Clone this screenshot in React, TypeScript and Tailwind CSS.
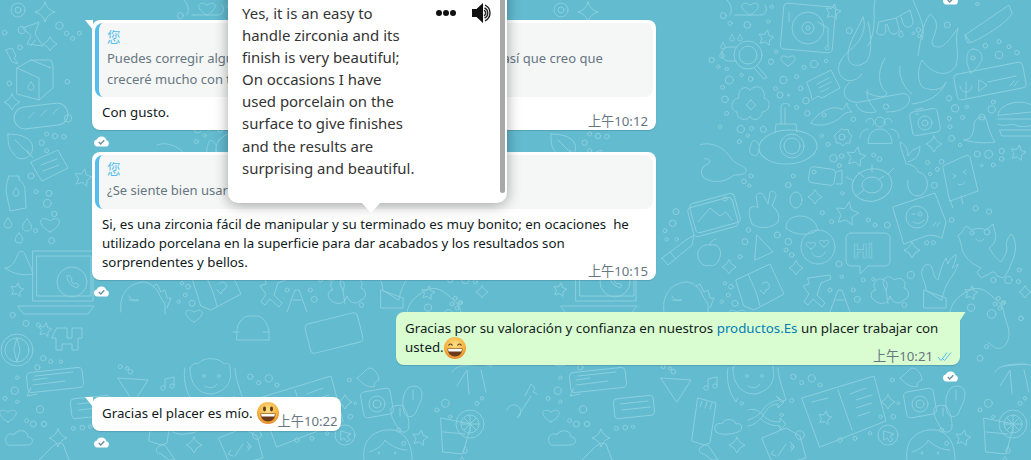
import React from "react";

const star = (cx: number, cy: number, r: number) => {
  let d = "";
  for (let i = 0; i < 10; i++) {
    const a = -Math.PI / 2 + (i * Math.PI) / 5 + 0.2;
    const q = i % 2 ? r * 0.5 : r;
    d += `${i ? "L" : "M"}${(cx + q * Math.cos(a)).toFixed(1)} ${(cy + q * Math.sin(a)).toFixed(1)}`;
  }
  return d + "Z";
};
const sparkle = (x: number, y: number, r: number) =>
  `M${x} ${y - r}Q${x + 2} ${y - 2} ${x + r} ${y}Q${x + 2} ${y + 2} ${x} ${y + r}Q${x - 2} ${y + 2} ${x - r} ${y}Q${x - 2} ${y - 2} ${x} ${y - r}Z`;
const heart = (x: number, y: number, s: number) =>
  `M${x} ${y + s}C${x - 2 * s} ${y - 0.1 * s} ${x - 1.1 * s} ${y - 1.2 * s} ${x} ${y - 0.4 * s}C${x + 1.1 * s} ${y - 1.2 * s} ${x + 2 * s} ${y - 0.1 * s} ${x} ${y + s}Z`;
const drop = (x: number, y: number, s: number) =>
  `M${x} ${y - s}C${x + s} ${y} ${x + s} ${y + s} ${x} ${y + s}C${x - s} ${y + s} ${x - s} ${y} ${x} ${y - s}Z`;

const Box = ({ x, y, w, h, a = 0, r = 4 }: { x: number; y: number; w: number; h: number; a?: number; r?: number }) => (
  <rect x={x - w / 2} y={y - h / 2} width={w} height={h} rx={r} transform={`rotate(${a} ${x} ${y})`} />
);
const C = ({ x, y, r }: { x: number; y: number; r: number }) => <circle cx={x} cy={y} r={r} />;

// little bubbles, in zoomed crop coordinates
const dots9 = [[70,47,9],[142,75,10],[90,70,6],[205,65,5],[215,20,5],[228,155,5],[213,185,8],[55,200,5],[80,207,5],[35,180,8],[88,240,12],[125,225,5],[152,237,7],[68,262,6],[75,298,10],[80,340,6],[250,240,11],[290,230,6],[227,265,6],[240,285,9],[302,265,7],[265,285,3],[318,302,10],[290,322,6],[322,340,8],[342,192,11],[312,202,6],[378,183,5],[558,320,8],[448,92,9],[460,358,7],[655,90,7],[640,100,4],[658,108,5],[742,75,9],[832,12,5],[856,137,7],[897,125,6],[927,140,6],[951,158,7],[897,165,11],[747,295,8],[765,325,11],[800,320,5],[875,328,11],[880,306,6],[748,355,6],[788,352,6],[750,380,6],[755,415,9],[780,435,5],[832,462,9],[866,463,12],[905,453,8],[905,477,7],[845,497,4],[880,495,6],[122,387,11],[155,385,6],[190,388,9],[143,407,5],[60,380,5],[118,425,6],[365,407,5],[384,433,6],[400,475,11],[425,468,7],[418,497,6],[521,465,6],[538,477,7],[683,487,6],[725,485,7],[712,508,6],[690,522,5],[703,556,9],[280,528,6],[265,555,8],[132,544,7],[153,528,6],[148,557,5],[427,580,5]];
const dots11 = [[48,65,9],[38,100,10],[15,122,6],[50,148,5],[20,148,5],[265,120,7],[255,155,9],[352,135,9],[385,155,10],[378,180,6],[395,195,7],[240,200,6],[195,280,5],[213,290,7],[205,315,6],[225,340,9],[185,335,5],[545,260,5],[537,222,9],[625,90,6],[645,105,6],[682,105,9],[515,95,6],[487,68,6],[800,158,6],[820,158,6],[752,255,11],[640,268,5],[610,270,6],[580,300,6],[592,328,9],[510,300,6],[733,345,7],[875,90,7],[947,55,8],[987,65,8],[1045,270,11],[1000,270,8],[1078,240,6],[1075,275,6],[933,353,11],[995,372,13],[1032,337,5],[1015,325,6],[980,470,6],[960,505,9],[1083,385,7],[400,560,8],[425,578,6],[455,565,11],[480,585,6],[395,632,6],[365,675,5],[420,735,13],[397,770,5],[540,750,7],[585,745,6],[630,730,5],[662,680,5],[700,680,7],[697,570,6],[715,640,4],[985,640,12],[960,660,6],[1000,680,5],[845,720,6],[860,760,6],[1080,640,6],[1095,625,5],[245,640,5],[40,545,7],[30,535,5],[10,530,6]];
const dots10 = [[65,90,11],[178,77,11],[14,98,7],[60,142,7],[200,100,7],[238,100,6],[218,115,6],[28,250,7],[202,245,7],[204,355,11],[125,428,8],[140,402,6],[165,408,8],[192,410,7],[140,452,6],[93,528,9],[108,575,6],[147,580,9],[142,610,12],[163,642,8],[107,692,6],[155,722,9],[38,945,8],[78,970,9],[115,975,6],[130,1075,8],[152,1085,6],[183,1085,5],[112,1102,8],[52,1133,5],[44,1172,11],[15,1195,6],[52,1205,5],[120,1228,11],[80,1262,6],[100,1272,9],[132,1272,8],[220,1285,6],[247,1283,7],[270,1280,5]];

function Doodles() {
  return (
    <svg className="absolute inset-0 h-[460px] w-[1031px]" viewBox="0 0 1031 460" aria-hidden="true">
      <defs>
        <g id="tile" fill="none" stroke="#8bcfdd" strokeWidth="1" strokeLinecap="round" strokeLinejoin="round">
          {dots9.map(([x, y, r], i) => <C key={i} x={700 + x / 3} y={y / 3} r={r / 3} />)}
          {dots11.map(([x, y, r], i) => <C key={i} x={660 + x / 3} y={190 + y / 3} r={r / 3} />)}
          {dots10.map(([x, y, r], i) => <C key={i} x={543 + x / 3} y={y / 3} r={r / 3} />)}

          {/* turntable */}
          <Box x={808} y={28} w={52} h={46} a={5} />
          <C x={808} y={28} r={16} /><C x={808} y={28} r={6} /><C x={808} y={28} r={2} />
          <path d="M818 22l10 6v18M789 12v10M827 46a2 2 0 1 0 .1 0" />
          <path d={star(833, 12, 8)} />
          <path d={heart(750, 8, 7)} />
          <path d="M730 15a12 12 0 0 0 -3 -15M735 15h25a6 6 0 0 0 5 -10" />
          {/* magnifier and paw */}
          <C x={748} y={55} r={14} /><C x={748} y={55} r={9} />
          <path d="M757 66l10 11l-3 2l-10 -11M736 47h-6a5 5 0 0 0 -2 14h8" />
          <path d={drop(723, 46, 3)} /><path d={drop(722, 55, 3)} /><path d={drop(732, 38, 3)} /><path d={drop(740, 38, 3)} />
          <path d={star(766, 38, 8)} />
          <path d={heart(788, 60, 6)} />
          {/* octopus */}
          <path d="M875 0C872 12 878 28 868 46M913 0C920 18 926 26 922 40" />
          <path d="M863 17C868 32 858 44 848 52C838 60 834 74 846 80C851 82 858 80 862 74M863 17C858 30 848 42 848 56C848 66 858 68 866 62C872 56 872 36 868 22" />
          <path d="M885 58C878 70 877 84 886 92C890 96 880 100 866 92M850 82C838 92 846 104 860 102C874 100 886 96 900 94C908 92 912 98 908 104C902 112 890 112 886 112M868 90C864 100 874 106 876 112C868 114 858 112 856 104" />
          <path d="M900 66C898 78 906 90 912 94M912 104C928 102 940 96 946 82C942 92 930 90 924 88C916 84 918 66 922 60C930 72 946 80 956 66C960 52 954 42 958 28C948 42 942 50 934 46C926 42 946 26 930 14C922 24 920 44 918 56" />
          <path d="M879 22l17 -4l3 10a5 5 0 0 1 -10 2l-2 -6l-2 1l1 6a5 5 0 0 1 -9 2zM896 18l14 -8l3 11a5 5 0 0 1 -10 2l-2 -6" />
          <path d={drop(901, 34, 3)} />
          {/* shoe, pin */}
          <path d="M965 35l44 -30l3 8c-2 8 -36 30 -44 30zM965 35l6 8" />
          <path d="M973 49c6 0 9 4 9 9c0 6 -8 12 -11 16c-2 -6 -5 -10 -4 -16c0 -5 2 -9 6 -9z" />
          <C x={973} y={58} r={2} />
          {/* voice note */}
          <Box x={990} y={81} w={70} h={26} a={-11} />
          <path d="M966 82v8M960 86a6 6 0 0 0 12 0M966 92v6M979 80l8 5l-8 6zM988 82l28 -6M1010 86l4 -5M1014 86l4 -5" />
          {/* chat and fish */}
          <path d="M807 82l24 -12l9 18l-18 10l-4 -2l-6 4l-1 -6z" />
          <path d="M817 84l12 -6M819 88l12 -6M821 92l8 -4" />
          <path d="M811 123c8 -12 22 -18 30 -14c4 2 3 -4 6 -6c0 4 2 6 5 9c-3 0 -5 0 -8 2c-8 10 -26 14 -33 9z" />
          <C x={824} y={115} r={2} />
          {/* flower */}
          <path d="M750 90c8 -8 16 0 14 8c8 2 6 14 -2 14c0 8 -10 10 -12 4c-2 6 -14 4 -13 -4c-8 -2 -6 -14 2 -14c-2 -8 6 -14 11 -8z" />
          <path d={sparkle(751, 105, 5)} />
          {/* submarine */}
          <ellipse cx={788} cy={147} rx={29} ry={17} transform="rotate(-3 788 147)" />
          <C x={792} y={146} r={12} /><C x={792} y={146} r={8} />
          <path d="M775 133l1 -9h20l1 8M781 124v-18a5 5 0 0 1 9 0M785 124v-16M759 145c-4 -8 -8 -4 -8 0c-2 4 -2 10 2 10c4 2 6 -2 6 -6" />
          {/* gear, star, sparkle */}
          <path d="M842 129l3 1l3 -1l1 4l3 3l-2 3l0 4l-4 0l-3 3l-3 -3l-4 0l0 -4l-2 -3l3 -3z" />
          <C x={842} y={137} r={3} />
          <path d={star(856, 157, 10)} />
          <path d={sparkle(934, 144, 8)} />
          <path d={star(1018, 153, 8)} />
          {/* camera */}
          <Box x={925} y={122} w={28} h={24} a={-10} />
          <C x={925} y={123} r={7} /><C x={925} y={123} r={3} />
          <path d="M915 110l8 -2M916 114h2" />
          {/* people */}
          <path d="M868 143c0 -10 6 -14 12 -14c6 0 12 6 12 14z" />
          <C x={880} y={122} r={5} />
          <path d="M866 122a4 4 0 1 1 7 3M892 122a4 4 0 1 0 -7 3M860 138c0 -4 2 -8 8 -9M899 138c0 -4 -2 -8 -8 -9" />
          {/* bell */}
          <path d="M964 140c8 0 10 -8 10 -16c2 -8 12 -10 13 -2c2 8 4 14 8 20c-12 2 -24 0 -31 -2z" />
          <C x={982} y={117} r={3} />
          {/* burger */}
          <path d="M998 115c0 -12 30 -20 40 -4zM998 119h40M998 124c8 4 12 -2 20 2c8 2 14 -2 20 0M1000 130h38v6h-36z" />
          {/* plant and popsicle */}
          <path d="M908 180a10 12 0 1 0 10 -8c-2 -6 -8 -8 -12 -8c-2 -8 -6 -16 -6 -22c6 2 8 8 8 14c4 -8 8 -6 12 -10c0 8 -4 14 -12 16" />
          <path d="M943 166l24 -11l3 2l8 34l-28 10zM950 200l3 8M961 196l2 8" />
          <path d="M953 174l3 2l-3 2M966 170l-3 2l3 2M958 184c3 2 6 0 7 -2" />
          {/* turtle */}
          <ellipse cx={872} cy={185} rx={20} ry={16} transform="rotate(-12 872 185)" />
          <ellipse cx={872} cy={185} rx={10} ry={8} />
          <path d="M852 180l-6 -3M888 174l6 -6M872 165v7M858 172l6 5M884 176l-6 4M856 196l8 -6" />
          {/* battery */}
          <Box x={822} y={176} w={26} h={16} a={8} />
          <path d="M836 172l6 -2v14l-6 0" />
          <C x={814} y={172} r={2} />
          {/* hand */}
          <path d="M700 145c10 -4 24 2 30 12c6 8 12 8 16 12c2 6 -8 6 -12 6c-10 8 -20 8 -28 4c-6 -2 -6 -12 0 -14c6 -2 4 -8 -2 -6" />
          {/* peace hand, photo, person */}
          <path d="M752 224c-2 -6 -4 -10 -2 -16c4 -2 6 -2 8 0l-2 -12c2 -4 6 -4 8 0l4 8l2 -12c4 -2 6 0 6 4l-4 10c6 4 8 10 6 16c-6 6 -18 8 -26 2z" />
          <Box x={715} y={213} w={46} h={30} a={-15} />
          <Box x={713} y={217} w={46} h={30} a={-15} />
          <path d="M698 222l12 -14l10 8l6 -4l6 8" />
          <C x={725} y={199} r={2} />
          <path d="M786 228c0 -8 6 -12 14 -12c10 0 16 6 18 14c-8 6 -24 6 -32 -2z" />
          <ellipse cx={796} cy={200} rx={6} ry={8} />
          <path d={sparkle(815, 197, 7)} />
          <path d={star(847, 214, 12)} />
          {/* chat emoji */}
          <path d="M893 207l42 -14l11 29l-4 16c-6 -2 -10 -4 -16 -2l-22 8z" />
          <C x={917} y={217} r={11} />
          <path d="M912 214h3M920 212a2 2 0 1 0 .1 0M913 222c4 2 8 2 11 -2" />
          <path d="M933 226l3 -4M937 226l3 -4" />
          {/* cat */}
          <path d="M962 232l4 -6l6 4c4 -2 10 -2 14 0l7 -6l2 8c2 6 0 12 -6 16c4 6 6 10 12 14c4 -6 6 -10 6 -14c-2 -6 2 -12 4 -14c6 6 6 18 0 30c-2 6 -4 10 -8 14l-6 -2c-2 -6 -6 -4 -8 -2l-8 4l-4 -6l4 -4c-8 -4 -14 -8 -18 -16c-2 -6 -2 -12 -5 -16z" />
          <C x={972} y={233} r={2} /><C x={987} y={232} r={3} />
          <path d="M976 239c2 3 6 3 8 0" />
          {/* pencil, apple */}
          <path d="M662 258l24 -18l8 -5l-2 10l-24 20l-6 -7zM670 252l6 7" />
          <path d="M710 245c8 -2 12 4 10 12c-2 8 -8 10 -10 8c-4 2 -10 0 -12 -8c-2 -8 6 -14 12 -12zM710 245c0 -3 2 -5 6 -6" />
          {/* play triangle, heart face */}
          <path d="M757 235l16 17l-18 8z" />
          <C x={818} y={247} r={17} />
          <path d={heart(811, 245, 4)} /><path d={heart(824, 243, 4)} />
          <path d="M812 253c3 5 10 6 13 -1" />
          {/* Hi */}
          <path d="M851 233h34a5 5 0 0 1 5 5v23a5 5 0 0 1 -5 5h-17l-8 8v-8h-9a5 5 0 0 1 -5 -5v-23a5 5 0 0 1 5 -5z" />
          <text x="853" y="258" fontFamily="Liberation Sans, sans-serif" fontSize="20" fontWeight="700" stroke="#8bcfdd" strokeWidth="0.7" fill="none">Hi</text>
          <path d={sparkle(912, 250, 8)} /><path d={sparkle(729, 267, 7)} /><path d={sparkle(796, 268, 7)} />
          {/* ok hand */}
          <path d="M926 290c0 -8 -6 -14 -4 -20c2 -6 8 -8 10 -2c2 6 2 10 6 12c2 -8 4 -16 8 -22l2 6c2 -6 6 -8 8 -10c0 8 -2 10 -4 14c4 -2 6 -4 6 -4c-2 8 -8 14 -12 22c-2 6 -4 10 -4 14zM924 290l22 8v10h-22z" />
          {/* dino */}
          <path d="M664 312c-2 -14 4 -28 22 -30c6 0 10 4 14 8l4 8l4 6v10M672 296c2 4 6 6 10 4h-10M696 286l4 -2l4 8l4 -2l2 8l4 0l-4 10" />
          {/* map */}
          <path d="M736 280l34 -16l14 30l-30 16l-10 -4z" />
          <path d="M748 274l8 18l4 14M762 284a4 4 0 1 1 4 6l-2 4l-4 -4" />
          {/* plane, A */}
          <path d="M808 278l22 -3l1 4l-10 4l-4 12l8 8l-3 4l-9 -8l-5 6l-4 -3l5 -8l-6 -8l6 -2z" />
          <path d="M830 312l8 -22h4l8 22" />
          <path d="M836 300h8" />
          {/* clover */}
          <path d="M886 290c-8 -10 2 -18 8 -10c6 -4 14 0 10 8c6 2 6 10 0 12c-6 6 -12 2 -14 -4c-2 8 -10 10 -16 4c-4 -2 -4 -10 2 -10c-6 -6 2 -14 8 -10c4 2 4 6 2 10zM886 290l2 14" />
          {/* gamepad */}
          <path d="M950 312c2 -10 8 -16 20 -22c8 -4 16 0 24 8c6 4 10 10 10 16c4 14 8 20 2 30c-6 8 -12 4 -18 -2" />
          <path d={star(971, 293, 7)} />
          <C x={995} y={304} r={2} /><C x={1000} y={308} r={2} /><C x={1003} y={303} r={2} />
          <path d={sparkle(1025, 292, 6)} />
          {/* grill */}
          <path d="M995 372c4 -8 24 -10 40 -6M1000 386l10 -16l2 24M1024 370l5 22M1005 366l20 -2" />
          {/* book */}
          <path d="M802 398l72 -22l12 45l-66 26z" />
          <path d="M838 390l14 40M812 402l16 -4M850 394l16 -6M856 400l16 -5M856 408l16 -5M858 416l12 -4" />
          <path d={star(825, 418, 7)} />
          {/* monkey */}
          <path d="M733 368c2 -4 6 -6 8 -4c6 -8 22 -6 26 0c4 -2 6 0 6 4c2 10 0 22 -18 26c-14 0 -22 -10 -22 -26z" />
          <C x={747} y={376} r={1.5} /><C x={762} y={376} r={1.5} />
          <path d="M748 386c4 3 10 2 12 -2M728 368c-2 8 0 24 8 34l2 -4M778 368c0 10 6 24 8 32l-6 2" />
          {/* paper plane, music */}
          <path d="M661 378l30 2l-14 22z" />
          <path d="M708 387v-8l9 -2v8M708 387a2 2 0 1 1 -4 2a2 2 0 0 1 4 -2M717 385a2 2 0 1 1 -4 2a2 2 0 0 1 4 -2" />
          {/* toothpaste, cloud */}
          <path d="M698 398l18 5l-6 40l-6 2l-12 -4z" />
          <path d="M702 401l-2 6M707 402l-2 6M712 403l-2 6" />
          <path d="M716 432c-4 -6 2 -10 6 -8c2 -6 12 -6 14 0c6 -2 8 6 2 8c-6 2 -16 4 -22 0z" />
          {/* arrows */}
          <path d="M748 420c8 -2 14 -8 16 -12c4 -4 10 -8 16 -8l-4 -4l8 6l-6 6l0 -4c-8 0 -12 6 -14 10c-2 4 -10 12 -16 12M748 410c4 -2 10 0 14 4c4 6 10 8 18 8l0 -4l6 6l-6 6l0 -4c-10 0 -16 -4 -20 -8" />
          {/* code file */}
          <path d="M762 438l24 -10l14 8l6 22l-32 8z" />
          <path d="M774 450l-3 4l5 2M790 442l4 4l-3 5M778 456l8 -12" />
          <path d={sparkle(737, 445, 8)} />
          {/* brush */}
          <path d="M700 448c4 -4 8 -4 10 0l8 12h-6l-8 -6c-4 0 -6 -4 -4 -6z" />
          {/* flip flops, bell */}
          <path d="M951 388c6 -4 14 -2 14 6c0 8 -4 12 -6 18c-2 6 -10 6 -12 0c-2 -8 -2 -18 4 -24zM956 390v10" />
          <path d="M946 406c-6 -2 -14 0 -12 6c0 6 6 14 8 18c4 4 10 2 10 -4c0 -8 -2 -14 -6 -20zM943 408v8" />
          <path d="M900 378c6 -4 8 -8 12 -10c6 0 10 8 10 12c-4 2 -6 4 -4 6c-6 2 -10 0 -18 -8z" />
          {/* camera low */}
          <Box x={920} y={403} w={30} h={26} a={-10} />
          <C x={920} y={404} r={8} /><C x={920} y={404} r={4} />
          <path d={sparkle(888, 402, 7)} />
          {/* cursor, girl, star */}
          <C x={888} y={435} r={10} />
          <path d="M884 431l10 3l-4 2l3 4l-3 2l-3 -4l-3 2z" />
          <path d="M907 460c-2 -14 4 -28 22 -30c16 -2 26 10 26 30" />
          <path d="M912 452c6 -2 14 -6 16 -12c6 6 14 10 22 10M922 452a1 1 0 1 0 .1 0M938 452a1 1 0 1 0 .1 0" />
          <path d={star(963, 438, 8)} />
          {/* glass and lemon */}
          <path d="M984 418l30 6l-8 30l-20 -2zM986 432l22 2" />
          <C x={1013} y={424} r={14} /><C x={1013} y={424} r={9} />
          <path d="M1004 424h18M1013 415v18M1007 418l12 12M1019 418l-12 12" />
          <path d={drop(1008, 450, 3)} /><path d={drop(1005, 460, 3)} />

          {/* under the green bubble */}
          <path d="M780 330c0 -6 6 -14 12 -14h8c6 0 10 8 12 14v10h-32zM776 332h6M812 332h-6" />
          <path d={heart(737, 315, 7)} />
          <Box x={877} y={333} w={54} h={30} a={-14} />

          {/* left column of the tile */}
          <C x={561} y={10} r={7} /><C x={561} y={10} r={3} />
          <path d={sparkle(588, 12, 10)} /><path d={sparkle(593, 44, 7)} />
          <path d="M566 28l16 -6l-4 12l8 12l-16 -2l4 -8zM574 46l4 -6" />
          <path d="M549 50l6 -2l4 8l-2 2l4 6l-6 -2l-3 -6z" />
          <path d="M560 68l14 -8h20l2 6v22l-14 12l-22 -6z" />
          <path d="M560 68l22 10v22M574 60l20 8" />
          <path d={drop(574, 86, 4)} />
          <Box x={584} y={116} w={54} h={22} a={-7} r={11} />
          <path d="M572 118c2 -4 6 -6 6 -6M584 116c2 -4 6 -6 6 -6M596 114c2 -4 4 -4 6 -6" />
          <path d={sparkle(555, 102, 8)} />
          <path d="M551 134c10 0 20 2 24 10c2 8 -2 12 -6 14c-6 2 -10 0 -12 -4c-6 -6 -6 -12 -6 -20zM558 140l14 14M570 150l6 8" />
          <path d="M574 162l27 -12l10 18l-26 13l-4 -6z" />
          <path d="M584 165l16 -6M586 171l16 -6" />
          <path d="M552 176l10 0v4c4 2 6 6 6 12l1 16l-16 3l-4 -20c0 -6 2 -12 3 -15z" />
          <path d={drop(559, 192, 4)} />
          <path d={star(626, 178, 9)} />
          <path d={drop(551, 223, 5)} /><path d={drop(570, 225, 6)} /><path d={drop(562, 238, 5)} />
          <path d={heart(593, 224, 8)} />
          <path d="M548 268c6 0 10 -6 12 -12c2 -6 6 -6 8 -2c2 6 6 12 8 20c-10 2 -20 0 -28 -6z" />
          <path d={star(560, 290, 7)} />
          <path d="M576 251h60v50h-60zM580 256h54v40h-54zM561 306h76l-6 8h-64z" />
          <C x={615} y={282} r={15} />
          <path d="M610 276c0 6 4 10 10 12l2 -3l-3 -2l-2 1l-3 -3l1 -2l-2 -3z" />
          <C x={560} y={350} r={16} /><C x={560} y={350} r={12} />
          <path d="M560 338l3 12l-3 12l-3 -12z" />
          <path d={star(588, 330, 7)} />
          <path d="M600 328h10v10h5v-10h10v10h-4v12h-6v-6h-10v6h-6v-12h-4z" />
          <Box x={598} y={380} w={56} h={20} a={-6} />
          <path d="M576 380l14 -2M576 385l32 -4M578 376l38 -4" />
          <path d="M574 388l-4 8l10 -2" />
          <Box x={634} y={407} w={40} h={20} a={-6} />
          <path d="M620 404l28 -3M622 410l28 -3" />
          <path d={heart(551, 415, 7)} />
          <path d="M551 445c-6 -6 0 -14 6 -10c2 -6 14 -6 14 2c6 0 6 8 0 8z" />
          <path d={sparkle(601, 438, 9)} />
          <path d="M582 460l12 -12c4 -4 8 -6 12 -4l6 16" />
          {/* key, behind the wrapped copy */}
          <path d="M1050 410a7 7 0 1 1 10 8l14 -22M1068 396l6 -12l4 4l-2 4l4 2" />
        </g>
      </defs>
      <use href="#tile" />
      <use href="#tile" x={-543} />
    </svg>
  );
}

// small cloud with a check under each message
function Cloud() {
  return (
    <svg width="17" height="12" viewBox="0 0 17 13" className="block">
      <path d="M4 12.5h9a3.5 3.5 0 0 0 .8-6.9A5.5 5.5 0 0 0 3.4 5 3.8 3.8 0 0 0 4 12.5z" fill="#ffffff" />
      <path d="M5.5 7.5l2.2 2.2 3.8-4" fill="none" stroke="#6d8fa0" strokeWidth="1.5" />
    </svg>
  );
}

function Tail({ right }: { right?: boolean }) {
  return right ? (
    <svg width="7" height="10" viewBox="0 0 7 10" className="absolute -right-[6px] top-0">
      <path d="M0 0h6.5L0 10z" fill="#d9fdd0" />
    </svg>
  ) : (
    <svg width="8" height="10" viewBox="0 0 8 10" className="absolute -left-[7px] top-0">
      <path d="M0 0h8v10z" fill="#ffffff" />
    </svg>
  );
}

function Time({ children }: { children: React.ReactNode }) {
  return <span className="block text-[13.2px] leading-[16px] text-[#667781] whitespace-nowrap">{children}</span>;
}

function Quote({ height, lines }: { height: string; lines: string[] }) {
  return (
    <div className={`flex flex-col rounded-lg bg-[#f5f6f6] border-l-4 border-[#53bdeb] pl-[8px] pt-[4px] ${height}`}>
      <div className="text-[13.5px] leading-[21px] text-[#53bdeb]">您</div>
      {lines.map((l) => (
        <div key={l} className="text-[13px] leading-[20.5px] text-[#667781] whitespace-nowrap overflow-hidden">{l}</div>
      ))}
    </div>
  );
}

function Grin() {
  return (
    <svg width="22" height="22" viewBox="0 0 22 22" className="block shrink-0">
      <defs>
        <radialGradient id="g1" cx="50%" cy="35%" r="65%">
          <stop offset="0%" stopColor="#fde08a" />
          <stop offset="70%" stopColor="#f6b13d" />
          <stop offset="100%" stopColor="#e8862a" />
        </radialGradient>
      </defs>
      <circle cx="11" cy="11" r="11" fill="url(#g1)" />
      <path d="M4.5 8.5c1-2 3-2 4 0M13.5 8.5c1-2 3-2 4 0" fill="none" stroke="#5a3a1a" strokeWidth="1.2" />
      <path d="M3.5 11.5h15c0 5-3.5 8-7.5 8s-7.5-3-7.5-8z" fill="#6b3a1a" />
      <path d="M4 12h14l-.6 2.5h-12.8z" fill="#ffffff" />
    </svg>
  );
}

function Smile() {
  return (
    <svg width="22" height="22" viewBox="0 0 22 22" className="block">
      <defs>
        <radialGradient id="g2" cx="50%" cy="35%" r="65%">
          <stop offset="0%" stopColor="#fde08a" />
          <stop offset="70%" stopColor="#f6b13d" />
          <stop offset="100%" stopColor="#e8862a" />
        </radialGradient>
      </defs>
      <circle cx="11" cy="11" r="11" fill="url(#g2)" />
      <ellipse cx="7.5" cy="7" rx="1.5" ry="2.4" fill="#5a3a1a" />
      <ellipse cx="14.5" cy="7" rx="1.5" ry="2.4" fill="#5a3a1a" />
      <path d="M3.5 11.5h15c0 5-3.5 8-7.5 8s-7.5-3-7.5-8z" fill="#6b3a1a" />
      <path d="M4 12h14l-.6 2.6h-12.8z" fill="#ffffff" />
    </svg>
  );
}

function Speaker() {
  return (
    <svg width="22" height="22" viewBox="0 0 22 22" className="block">
      <path d="M0 7h4.5l6.5-6v20l-6.5-6H0z" fill="#111111" />
      <path d="M12 8.2a3.2 3.2 0 0 1 0 5.6M12.5 5.8a5.8 5.8 0 0 1 0 10.4M13 3.2a8.6 8.6 0 0 1 0 15.6" fill="none" stroke="#222222" strokeWidth="1.4" />
    </svg>
  );
}

const popupLines = [
  "Yes, it is an easy to",
  "handle zirconia and its",
  "finish is very beautiful;",
  "On occasions I have",
  "used porcelain on the",
  "surface to give finishes",
  "and the results are",
  "surprising and beautiful.",
];

function Popup() {
  return (
    <div className="absolute left-[228px] -top-[22px] w-[279px] h-[225px] flex rounded-[10px] bg-white shadow-[0_2px_14px_rgba(0,0,0,0.35)]">
      <div className="flex-1 pl-[14px] pt-[24px] text-[14.95px] leading-[22.1px] text-[#333333]">
        {popupLines.map((l) => <div key={l} className="whitespace-nowrap">{l}</div>)}
      </div>
      <div className="absolute left-[208px] top-[24px] flex items-center gap-[16px]">
        <div className="flex gap-[1px]">
          <span className="w-[6px] h-[6px] rounded-full bg-[#111111]" />
          <span className="w-[6px] h-[6px] rounded-full bg-[#111111]" />
          <span className="w-[6px] h-[6px] rounded-full bg-[#111111]" />
        </div>
        <Speaker />
      </div>
      <div className="w-[5px] h-[215px] mr-[2px] rounded-b-[3px] bg-[#a8a8a8]" />
      <svg width="20" height="11" viewBox="0 0 20 11" className="absolute left-[133px] -bottom-[10px]">
        <path d="M0 0h20L10 11z" fill="#ffffff" />
      </svg>
    </div>
  );
}

export default function App() {
  return (
    <div className="relative h-[460px] w-[1031px] overflow-hidden bg-[#63bbd0] font-['Noto_Sans','Noto_Sans_CJK_SC',sans-serif] text-[13.3px] text-[#111b21]">
      <Doodles />
      <div className="relative flex flex-col pl-[92px] pr-[71px]">
        <div className="flex h-[20px] justify-end pr-[1px]">
          <div className="-mt-[7px]"><Cloud /></div>
        </div>

        <div className="relative w-[564px] h-[110px] rounded-lg bg-white p-[3px] shadow-[0_1px_1px_rgba(11,20,26,0.15)]">
          <Tail />
          <Quote height="h-[74px]" lines={["Puedes corregir algunos de mis errores en este mi primer envío, así que creo que", "creceré mucho con tu ayuda."]} />
          <div className="pl-[7px] pt-[6px] leading-[19px]">Con gusto.</div>
          <div className="absolute right-[8px] bottom-[1px]"><Time>上午10:12</Time></div>
        </div>
        <div className="ml-[1px] mt-[5px] mb-[5px]"><Cloud /></div>

        <div className="relative w-[564px] h-[128px] rounded-lg bg-white p-[3px] shadow-[0_1px_1px_rgba(11,20,26,0.15)]">
          <Quote height="h-[54px]" lines={["¿Se siente bien usar esta zirconia?"]} />
          <div className="pl-[7px] pt-[6px] leading-[19px] whitespace-pre-line">
            {"Si, es una zirconia fácil de manipular y su terminado es muy bonito; en ocaciones\u00a0 he\nutilizado porcelana en la superficie para dar acabados y los resultados son\nsorprendentes y bellos."}
          </div>
          <div className="absolute right-[8px] bottom-[1px]"><Time>上午10:15</Time></div>
        </div>
        <div className="ml-[1px] mt-[5px] mb-[15px]"><Cloud /></div>

        <div className="relative self-end w-[564px] h-[53px] rounded-lg rounded-tr-none bg-[#d9fdd0] pl-[9px] pt-[7px] leading-[19px] shadow-[0_1px_1px_rgba(11,20,26,0.15)]">
          <Tail right />
          <div className="whitespace-nowrap">
            Gracias por su valoración y confianza en nuestros <span className="text-[#027eb5]">productos.Es</span> un placer trabajar con
          </div>
          <div className="flex h-[19px] items-center">usted.<Grin /></div>
          <div className="absolute right-[8px] bottom-[1px] flex items-center gap-[4px]">
            <Time>上午10:21</Time>
            <svg width="15" height="11" viewBox="0 0 15 11">
              <path d="M1 6l3 3.5L10 1.5M6 8l1.5 1.5L14 1.5" fill="none" stroke="#53bdeb" strokeWidth="1" />
            </svg>
          </div>
        </div>
        <div className="self-end mr-[1px] mt-[5px] mb-[15px]"><Cloud /></div>

        <div className="relative self-start flex h-[34px] w-[249px] items-start rounded-lg bg-white pl-[10px] shadow-[0_1px_1px_rgba(11,20,26,0.15)]">
          <Tail />
          <span className="pt-[7px] leading-[19px] whitespace-nowrap">Gracias el placer es mío.</span>
          <div className="ml-[4px] mt-[5px]"><Smile /></div>
          <div className="mt-[16px] -ml-[1px]"><Time>上午10:22</Time></div>
        </div>
        <div className="ml-[1px] mt-[5px]"><Cloud /></div>
      </div>
      <Popup />
    </div>
  );
}
